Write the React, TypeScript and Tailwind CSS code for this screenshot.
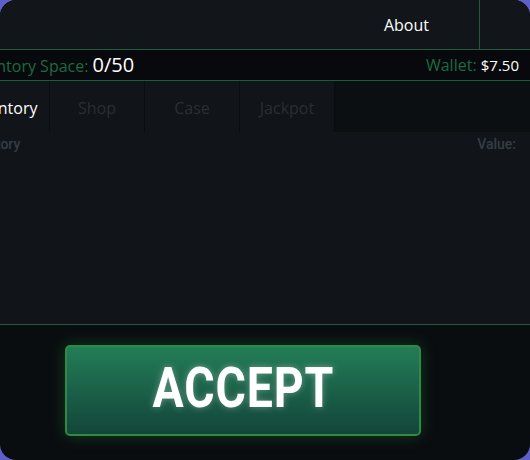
function Tab({ label, active }: { label: string; active?: boolean }) {
    return (
        <div
            className={`w-[95px] h-full flex items-center justify-center border-r border-[#0a0c0f] bg-[#111418] text-[16px] pt-[3px] ${
                active ? "text-white" : "text-[#2a2f35]"
            }`}
        >
            {label}
        </div>
    );
}

export default function App() {
    return (
        <div className="w-[530px] h-[460px] bg-[#5d60c9]">
            <div className="w-full h-full rounded-[16px] overflow-hidden bg-[#0a0d10] font-['Open_Sans',sans-serif]">
                <div className="-ml-[45px] w-[575px] h-full flex flex-col">
                    {/* header */}
                    <div className="h-[50px] flex justify-end bg-[#12161b] border-b border-[#1e5a3d]">
                        <a className="px-[50px] flex items-center text-white text-base">About</a>
                        <div className="w-[51px] border-l border-[#1e5a3d]" />
                    </div>

                    {/* stats bar */}
                    <div className="h-[31px] flex items-center justify-between pl-[10px] pr-[11px] bg-[#07090c] border-b border-[#1e5a3d]">
                        <p className="text-[16px] text-[#1d6a45]">
                            Inventory Space: <span className="text-[20px] text-white">0/50</span>
                        </p>
                        <p className="text-[16px] text-[#1d6a45]">
                            Wallet: <span className="text-[15px] text-white font-medium">$7.50</span>
                        </p>
                    </div>

                    {/* tabs */}
                    <div className="h-[51px] flex bg-[#0c0f12]">
                        <Tab label="Inventory" active />
                        <Tab label="Shop" />
                        <Tab label="Case" />
                        <Tab label="Jackpot" />
                    </div>

                    {/* inventory list */}
                    <div className="h-[193px] bg-[#111519] border-b border-[#1e5a3d] pl-[7px] pr-[14px] pt-[2px]">
                        <div className="flex justify-between text-[14px] font-medium text-[#363d45] font-['Roboto',sans-serif]">
                            <span>Inventory</span>
                            <span>Value:</span>
                        </div>
                    </div>

                    {/* accept */}
                    <div className="flex-1 pt-[20px] pl-[110px]">
                        <button className="w-[356px] h-[91px] rounded-[5px] border-2 border-[#2f8a47] bg-gradient-to-b from-[#237d57] to-[#13463a] shadow-[0_0_16px_rgba(40,170,60,0.3)] flex items-center justify-center text-white font-['Roboto',sans-serif]">
                            <span className="inline-block text-[56px] font-bold leading-none tracking-[1px] scale-x-[0.83] -mt-[6px] [text-shadow:0_0_8px_rgba(255,255,255,0.35)]">
                                ACCEPT
                            </span>
                        </button>
                    </div>
                </div>
            </div>
        </div>
    );
}
